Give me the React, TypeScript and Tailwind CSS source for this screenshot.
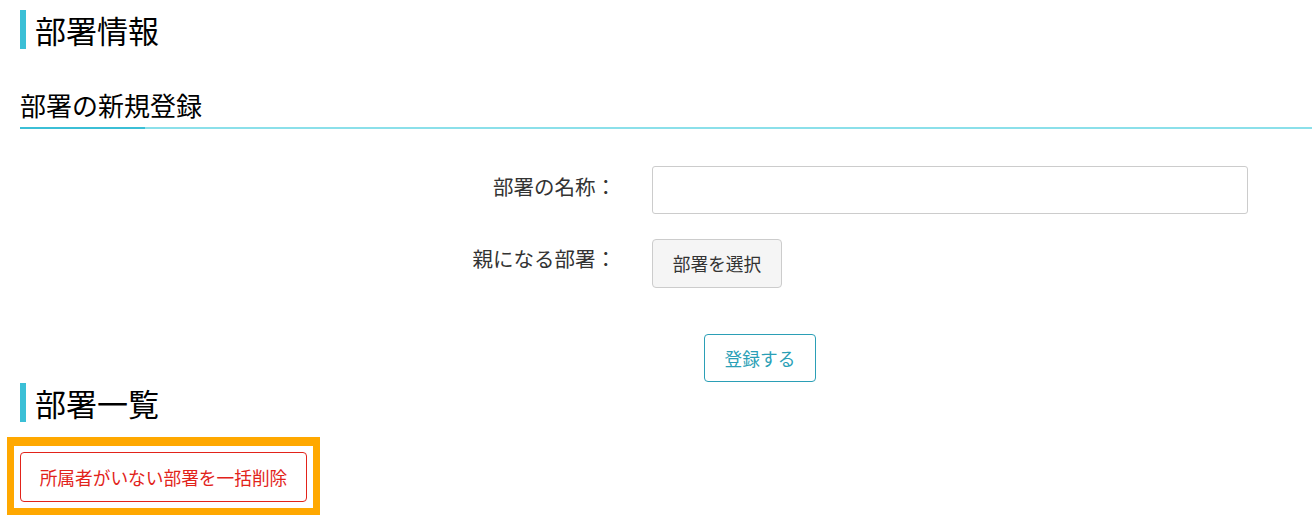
export default function App() {
  return (
    <div className="min-h-[522px] bg-white pl-5 font-['Noto_Sans_CJK_JP',sans-serif] text-[#333]">
      <h2 className="mt-[10px] border-l-[6px] border-[#3bbfd6] pl-[9px] text-[31px] leading-[39px] text-black">
        部署情報
      </h2>

      <div className="mt-[38px]">
        <h3 className="pb-[4px] text-[26px] leading-[36px] text-black">部署の新規登録</h3>
        <div className="flex h-[2px]">
          <div className="w-[125px] bg-[#3bbfd6]" />
          <div className="flex-1 bg-[#8be0ea]" />
        </div>
      </div>

      <div className="mt-[37px] grid grid-cols-[596px_596px] gap-x-[36px] gap-y-[25px]">
        <label className="pt-[5px] text-right text-[20.5px] leading-[30px]">部署の名称：</label>
        <input
          type="text"
          className="h-[48px] rounded-[3px] border border-[#ccc] bg-white px-3 text-[17px] outline-none"
        />
        <label className="pt-[4px] text-right text-[20.5px] leading-[30px]">親になる部署：</label>
        <div>
          <button className="h-[49px] w-[130px] rounded-[4px] border border-[#ccc] bg-[#f5f5f5] text-[17.7px] text-[#333]">
            部署を選択
          </button>
        </div>
      </div>

      <div className="mt-[46px] pl-[684px]">
        <button className="h-[48px] w-[112px] rounded-[4px] border border-[#2b9fb6] bg-white text-[17.7px] text-[#2b9fb6]">
          登録する
        </button>
      </div>

      <h2 className="mt-px border-l-[6px] border-[#3bbfd6] pl-[9px] text-[31px] leading-[39px] text-black">
        部署一覧
      </h2>

      <div className="-ml-[13px] mt-[15px] w-fit border-[7px] border-t-[9px] border-[#ffa800] bg-white p-[6px] pt-[6px]">
        <button className="h-[50px] w-[287px] rounded-[4px] border border-[#e2231a] bg-white text-[17.7px] text-[#e2231a]">
          所属者がいない部署を一括削除
        </button>
      </div>
    </div>
  );
}
